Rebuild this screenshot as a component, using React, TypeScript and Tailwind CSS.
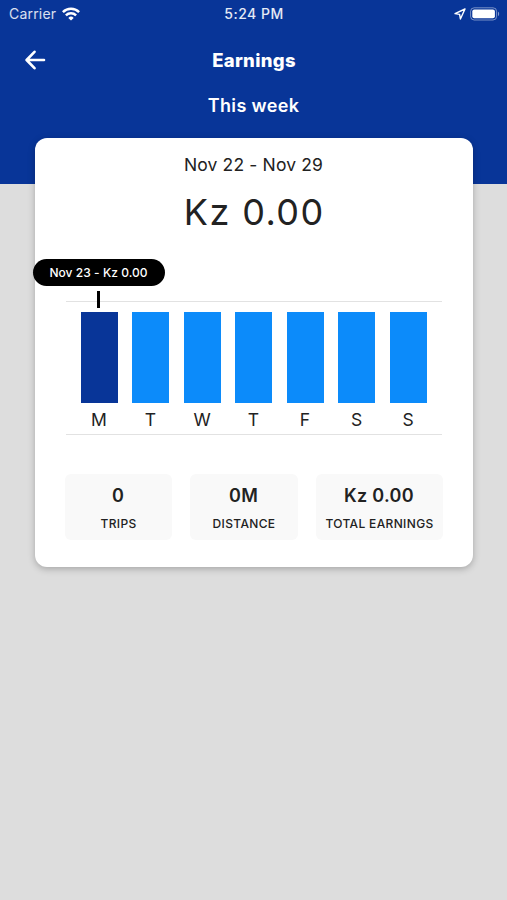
const days = [
  { label: 'M', active: true },
  { label: 'T', active: false },
  { label: 'W', active: false },
  { label: 'T', active: false },
  { label: 'F', active: false },
  { label: 'S', active: false },
  { label: 'S', active: false },
];

const stats = [
  { value: '0', label: 'TRIPS', width: 'w-[107px]' },
  { value: '0M', label: 'DISTANCE', width: 'w-[108px]' },
  { value: 'Kz 0.00', label: 'TOTAL EARNINGS', width: 'w-[127px]' },
];

function WifiIcon() {
  return (
    <svg width="18" height="14" viewBox="0 0 18 14" fill="none" stroke="white" strokeWidth="2.5">
      <path d="M0.9 5.1a11.6 11.6 0 0 1 16.2 0" />
      <path d="M3.9 8.3a7.3 7.3 0 0 1 10.2 0" />
      <path d="M9 13.6 6.3 10.9a3.9 3.9 0 0 1 5.4 0Z" fill="white" stroke="none" />
    </svg>
  );
}

function StatusBar() {
  return (
    <div className="h-[27px] pl-[9px] pr-[6px] grid grid-cols-3 items-center">
      <div className="flex items-center gap-[6px] text-[14px] tracking-[0.2px] text-white/85">
        <span>Carrier</span>
        <WifiIcon />
      </div>
      <div className="pr-[2px] text-center text-[14px] font-medium tracking-[0.5px] text-white/90">5:24 PM</div>
      <div className="flex items-center justify-end gap-[4px]">
        <svg width="12" height="12" viewBox="0 0 12 12" fill="none" stroke="white" strokeWidth="1.4" strokeLinejoin="round">
          <path d="M11 1 1 5.600l4.600.800.800 4.600Z" />
        </svg>
        <svg width="31" height="14" viewBox="0 0 31 14">
          <rect x="0.6" y="0.8" width="26" height="12.2" rx="3.6" fill="none" stroke="white" strokeOpacity="0.45" />
          <rect x="2.3" y="2.5" width="22.6" height="8.8" rx="2" fill="white" />
          <path d="M28 4.8c1.5.5 1.5 3.7 0 4.2Z" fill="white" fillOpacity="0.5" />
        </svg>
      </div>
    </div>
  );
}

export default function App() {
  return (
    <div className="min-h-[900px] bg-[#dddddd] font-['Inter',sans-serif] text-[#222222]">
      <header className="h-[184px] bg-[#083598] text-white">
        <StatusBar />
        <div className="h-[65px] px-[25px] grid grid-cols-[24px_1fr_24px] items-center">
          <button type="button" aria-label="Back">
            <svg width="21" height="20" viewBox="0 0 21 20" fill="none" stroke="white" strokeWidth="2.6" strokeLinecap="round" strokeLinejoin="round">
              <path d="M9.500 1.800 1.600 10l7.900 8.200M2 10h17" />
            </svg>
          </button>
          <h1 className="pt-[2px] pl-[1px] text-center text-[18.5px] font-extrabold tracking-[0.3px]">Earnings</h1>
        </div>
        <h2 className="h-[27px] text-center text-[18px] leading-[27px] font-semibold tracking-[0.35px]">This week</h2>
      </header>

      {/* Earnings card */}
      <main className="-mt-[46px] mx-auto w-[438px] h-[429px] px-[30px] pt-[15px] rounded-[12px] bg-white shadow-[0_2px_7px_rgba(0,0,0,0.25)]">
        <p className="h-[24px] text-center text-[17.5px] leading-[24px] tracking-[0.15px]">Nov 22 - Nov 29</p>
        <p className="h-[70px] mt-[12px] text-center text-[36px] leading-[46px] tracking-[1.4px] indent-[1.4px]">Kz 0.00</p>

        {/* Weekly chart */}
        <div className="relative mt-[42px] mx-px h-[134px] px-[15px] pt-[10px] border-y border-[#e2e2e2] flex justify-between">
          {days.map((day, i) => (
            <div key={i} className="w-[37px]">
              <div className={`h-[91px] ${day.active ? 'bg-[#083598]' : 'bg-[#0c8bfa]'}`} />
              <div className="mt-[5px] text-center text-[17.5px] leading-6">{day.label}</div>
            </div>
          ))}
          <div className="absolute -left-[33px] -top-[43px] w-[132px] h-[27px] rounded-full bg-black text-white text-center text-[12px] leading-[27px] font-medium tracking-[0.05px]">
            Nov 23 - Kz 0.00
          </div>
          <div className="absolute left-[31.5px] -top-[11px] w-[3px] h-[17px] bg-black" />
        </div>

        {/* Totals */}
        <div className="mt-[39px] flex justify-between">
          {stats.map(stat => (
            <div key={stat.label} className={`${stat.width} h-[66px] pt-[9px] rounded-[6px] bg-[#f9f9f9] text-center`}>
              <div className="text-[18px] leading-[25px] font-semibold tracking-[0.3px]">{stat.value}</div>
              <div className="mt-[7px] pl-px text-[12px] leading-[18px] font-medium tracking-[0.35px] whitespace-nowrap">{stat.label}</div>
            </div>
          ))}
        </div>
      </main>
    </div>
  );
}
